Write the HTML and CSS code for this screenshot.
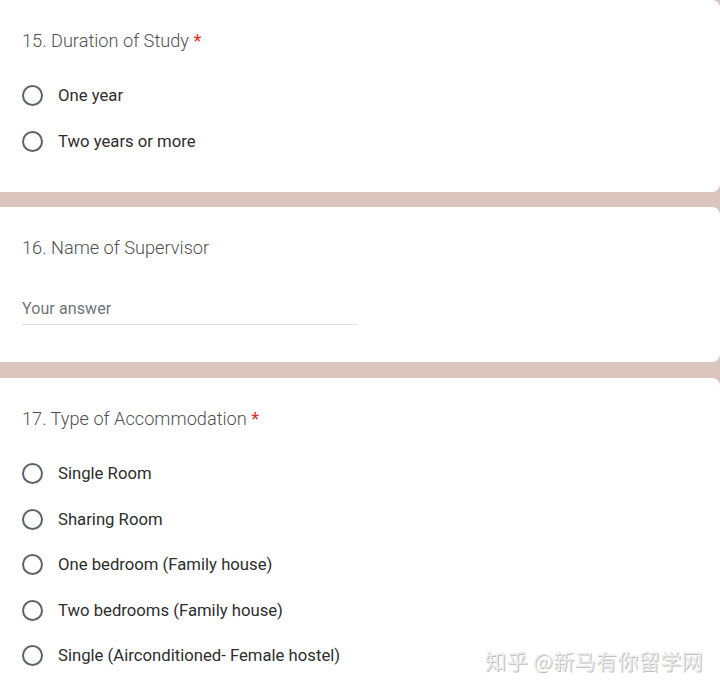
FILE: index.html
```html
<!DOCTYPE html>
<html>
<head>
<meta charset="utf-8">
<link rel="stylesheet" href="styles.css">
</head>
<body>
<div class="page">
  <section class="card card-first">
    <div class="title">15. Duration of Study <span class="req">*</span></div>
    <div class="options">
      <div class="opt"><span class="radio"></span><span class="label">One year</span></div>
      <div class="opt"><span class="radio"></span><span class="label">Two years or more</span></div>
    </div>
  </section>
  <section class="card card-text">
    <div class="title">16. Name of Supervisor</div>
    <div class="answer"><span class="placeholder">Your answer</span></div>
  </section>
  <section class="card card-last">
    <div class="title">17. Type of Accommodation <span class="req">*</span></div>
    <div class="options">
      <div class="opt"><span class="radio"></span><span class="label">Single Room</span></div>
      <div class="opt"><span class="radio"></span><span class="label">Sharing Room</span></div>
      <div class="opt"><span class="radio"></span><span class="label">One bedroom (Family house)</span></div>
      <div class="opt"><span class="radio"></span><span class="label">Two bedrooms (Family house)</span></div>
      <div class="opt"><span class="radio"></span><span class="label">Single (Airconditioned- Female hostel)</span></div>
    </div>
  </section>
</div>
<div class="watermark">知乎 @新马有你留学网</div>
</body>
</html>
```
FILE: styles.css
```css
html, body {
  margin: 0;
  padding: 0;
}
body {
  background: #dac6bd;
  font-family: Roboto, "Noto Sans", Arial, sans-serif;
  width: 720px;
  height: 689px;
  overflow: hidden;
  position: relative;
}
.page {
  display: flex;
  flex-direction: column;
  gap: 15px;
}
.card {
  background: #fff;
  margin-left: -20px;
  width: 740px;
  border-radius: 8px;
  box-sizing: border-box;
  padding: 29px 0 0 42px;
}
.card-first {
  height: 192px;
}
.card-text {
  height: 155px;
}
.card-last {
  height: 330px;
  margin-top: 1px;
  border-bottom-right-radius: 0;
}
.title {
  font-size: 18.2px;
  line-height: 24px;
  color: #505050;
  font-weight: 300;
}
.req {
  color: #d93025;
  font-weight: 400;
}
.options {
  padding-top: 20px;
}
.opt {
  height: 45.5px;
  display: flex;
  align-items: center;
}
.radio {
  width: 17px;
  height: 17px;
  border: 2.5px solid #5f6368;
  border-radius: 50%;
  flex: none;
}
.label {
  margin-left: 15px;
  font-size: 16.7px;
  color: #2d2d2d;
}
.answer {
  margin-top: 39px;
  width: 336px;
  border-bottom: 1px solid #e0e0e0;
  padding-bottom: 5px;
  line-height: 20px;
}
.placeholder {
  font-size: 16px;
  color: #70757a;
  letter-spacing: 0.1px;
}
.watermark {
  position: absolute;
  left: 485px;
  top: 646px;
  font-family: "Noto Sans CJK SC", sans-serif;
  font-size: 21px;
  line-height: 28px;
  color: #ececec;
  text-shadow: 1px 1px 0 #c0c0c0;
  letter-spacing: 0.4px;
}
```
